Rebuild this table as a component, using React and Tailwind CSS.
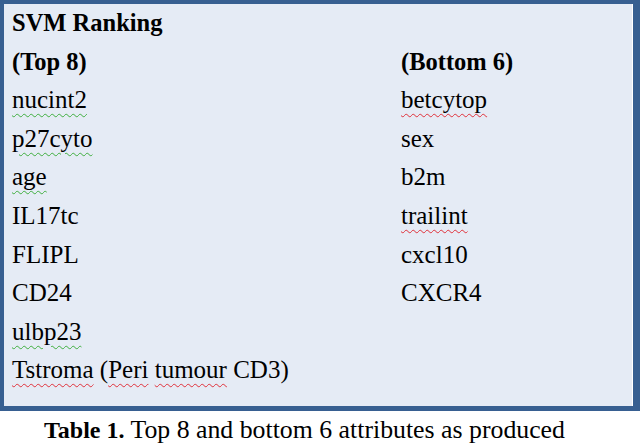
export default function App() {
  const serif = { fontFamily: '"Liberation Serif", "Times New Roman", serif' };
  const g = "underline decoration-wavy decoration-[#3fae3f] decoration-1 underline-offset-[5px]";
  const r = "underline decoration-wavy decoration-[#e0303a] decoration-1 underline-offset-[5px]";
  const left = [
    <span className={g}>nucint2</span>,
    <span className={g}>p27cyto</span>,
    <span className={g}>age</span>,
    <span>IL17tc</span>,
    <span>FLIPL</span>,
    <span>CD24</span>,
    <span className={g}>ulbp23</span>,
    <span>
      <span className={r}>Tstroma</span> (<span className={r}>Peri</span>{" "}
      <span className={r}>tumour</span> CD3)
    </span>,
  ];
  const right = [
    <span className={r}>betcytop</span>,
    <span>sex</span>,
    <span>b2m</span>,
    <span className={r}>trailint</span>,
    <span>cxcl10</span>,
    <span>CXCR4</span>,
  ];
  return (
    <div className="w-[640px] h-[444px] overflow-hidden bg-white text-black" style={serif}>
      <div className="w-[640px] h-[411px] bg-[#375f91] pt-[5px] pl-[4px] pr-[7px] pb-[4px]">
        <div className="h-full bg-[#e5ebf5] border-r border-white pl-[8px] text-[25px] leading-[38.6px]">
          <div className="-mt-[1px]">
            <div className="font-bold text-[24.5px]">SVM Ranking</div>
            <div className="grid grid-cols-[389px_1fr]">
              <div>
                <div className="font-bold text-[24.5px]">(Top 8)</div>
                {left.map((x, i) => (
                  <div key={i}>{x}</div>
                ))}
              </div>
              <div>
                <div className="font-bold text-[24.5px]">(Bottom 6)</div>
                {right.map((x, i) => (
                  <div key={i}>{x}</div>
                ))}
              </div>
            </div>
          </div>
        </div>
      </div>
      <div className="pl-[44px] pt-[4px] text-[25.8px] leading-[30px] whitespace-nowrap">
        <span className="font-bold text-[24px]">Table 1.</span>
        <span> Top 8 and bottom 6 attributes as produced</span>
      </div>
    </div>
  );
}
